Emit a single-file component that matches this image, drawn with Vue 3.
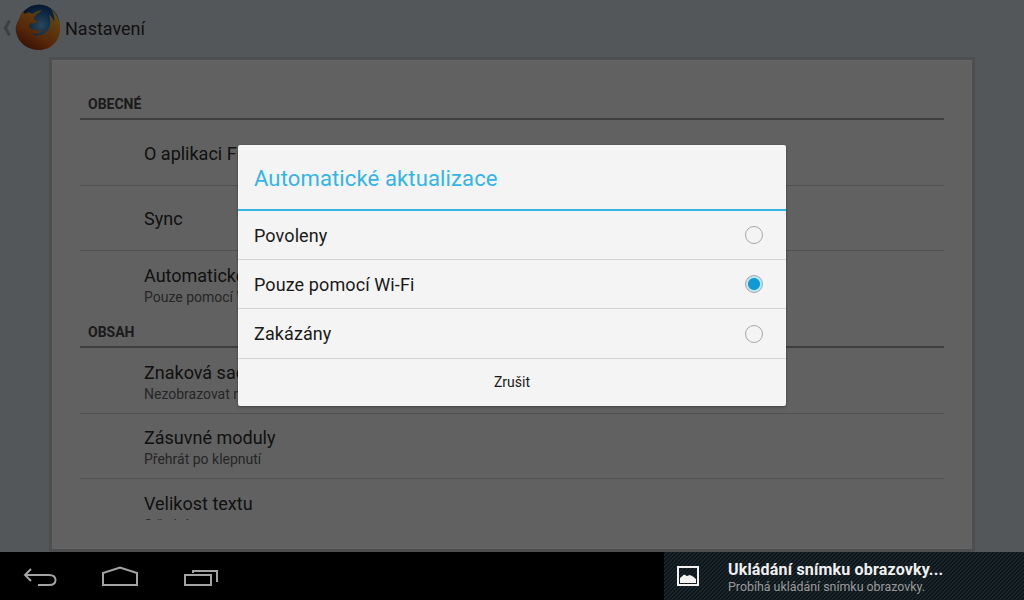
<template>
  <div class="device">
    <div class="screen">
      <header class="toolbar">
        <svg class="chevron" width="8" height="16" viewBox="0 0 8 16">
          <path d="M6.5 0.500 L2.500 8 L6.500 15.500" fill="none" stroke="#9aa0a4" stroke-width="3" />
        </svg>
        <svg class="logo" width="46" height="46" viewBox="0 0 46 46">
          <defs>
            <radialGradient id="globe" cx="0.55" cy="0.5" r="0.6">
              <stop offset="0" stop-color="#6cb2e4" />
              <stop offset="0.5" stop-color="#1f66a8" />
              <stop offset="1" stop-color="#0c2b5e" />
            </radialGradient>
            <linearGradient id="fox" x1="0.95" y1="0.05" x2="0.3" y2="1">
              <stop offset="0" stop-color="#f5d040" />
              <stop offset="0.3" stop-color="#ea9420" />
              <stop offset="0.65" stop-color="#d9651a" />
              <stop offset="1" stop-color="#8f2c0c" />
            </linearGradient>
          </defs>
          <circle cx="24" cy="21" r="20.5" fill="url(#globe)" />
          <path
            d="M8 7 C6 10 5 12 4 15 C1 20 0 24 1 28 C3 39 13 46 24 46 C36 46 45 37 45 25 C45 17 42 10 36 5 C39 10 40 14 39 18 C38 15 36 12 34 11 C36 16 36 24 31 28 C27 32 20 33 16 29 C20 31 25 29 27 27 C24 27 20 26 17 25 C14 24 13 21 16 19 C20 20 22 18 22 17 C19 16 18 15 20 12 C22 9 26 8 27 6 C22 7 19 9 17 10 C15 8 12 8 10 10 C9 9 8 8 8 7 Z"
            fill="url(#fox)"
          />
        </svg>
        <span class="toolbar-title">Nastavení</span>
      </header>

      <main class="panel">
        <div class="panel-inner">
          <div class="list">
            <section v-for="section in sections" :key="section.name">
              <h2 class="section-name">{{ section.name }}</h2>
              <div v-for="row in section.rows" :key="row.title" class="row">
                <div class="row-title">{{ row.title }}</div>
                <div v-if="row.sub" class="row-sub">{{ row.sub }}</div>
              </div>
            </section>
          </div>
        </div>
      </main>

      <div class="overlay">
        <div class="dialog">
          <div class="dialog-title">Automatické aktualizace</div>
          <div v-for="option in options" :key="option" class="option">
            <span>{{ option }}</span>
            <span class="radio" :class="{ checked: option === selected }"></span>
          </div>
          <div class="dialog-button">Zrušit</div>
        </div>
      </div>
    </div>

    <footer class="system-bar">
      <div class="nav">
        <svg width="240" height="48" viewBox="0 0 240 48" fill="none" stroke="#a3a3a3" stroke-width="2">
          <path d="M31 17 L25 23 L31 29 M25 23 H49 C53 23 55.500 25 55.500 28 C55.500 31 53 33 49 33 H38" />
          <path d="M103 33 V21 L120 15.500 L137 21 V33 Z" />
          <path d="M185 23 H211 V33 H185 Z M193 21 V19 H217 V30" />
        </svg>
      </div>
      <div class="notification">
        <svg class="notification-icon" width="22" height="20" viewBox="0 0 22 20">
          <rect x="1" y="1" width="20" height="18" fill="none" stroke="#f2f2f2" stroke-width="2" />
          <path d="M3 17 V12 L7 8.500 L10 10 L13 9 L16 10.500 L19 13 V17 Z" fill="#f2f2f2" />
        </svg>
        <div class="notification-text">
          <div class="notification-title">Ukládání snímku obrazovky...</div>
          <div class="notification-sub">Probíhá ukládání snímku obrazovky.</div>
        </div>
      </div>
    </footer>
  </div>
</template>

<script setup>
const sections = [
  {
    name: 'OBECNÉ',
    rows: [
      { title: 'O aplikaci Firefox' },
      { title: 'Sync' },
      { title: 'Automatické aktualizace', sub: 'Pouze pomocí Wi-Fi' }
    ]
  },
  {
    name: 'OBSAH',
    rows: [
      { title: 'Znaková sada', sub: 'Nezobrazovat nabídku' },
      { title: 'Zásuvné moduly', sub: 'Přehrát po klepnutí' },
      { title: 'Velikost textu', sub: 'Střední' }
    ]
  }
]

const options = ['Povoleny', 'Pouze pomocí Wi-Fi', 'Zakázány']
const selected = 'Pouze pomocí Wi-Fi'
</script>

<style>
html,
body {
  margin: 0;
  background: #000;
}
</style>

<style scoped>
.device {
  width: 1024px;
  height: 600px;
  display: flex;
  flex-direction: column;
  overflow: hidden;
  font-family: Roboto, 'Liberation Sans', sans-serif;
}

.screen {
  position: relative;
  height: 552px;
  display: flex;
  flex-direction: column;
  background: #d2d9df;
}

.toolbar {
  height: 57px;
  flex: none;
  display: flex;
  align-items: center;
  padding-left: 3px;
}

.chevron {
  margin-right: 4px;
  margin-top: -1px;
}

.logo {
  margin-right: 4px;
  margin-top: -3px;
}

.toolbar-title {
  font-size: 18px;
  color: #2c2c2c;
}

.panel {
  flex: 1;
  min-height: 0;
  margin: 0 49px;
  display: flex;
  border: 3px solid #bec4c9;
}

.panel-inner {
  flex: 1;
  min-width: 0;
  display: flex;
  flex-direction: column;
  border: 1px solid #fbfbfb;
  background: #f2f2f2;
  padding: 27px 27px 28px;
}

.list {
  flex: 1;
  min-height: 0;
  overflow: hidden;
}

.section-name {
  box-sizing: border-box;
  height: 32px;
  margin: 0;
  padding: 0 8px;
  font-size: 14px;
  font-weight: 700;
  line-height: 33px;
  color: #444;
  border-bottom: 2px solid #9b9b9b;
}

.row {
  box-sizing: border-box;
  height: 65px;
  padding-top: 2px;
  padding-left: 64px;
  display: flex;
  flex-direction: column;
  justify-content: center;
  border-bottom: 1px solid #c8c8c8;
}

.section-name + .row {
  height: 66px;
}

.row:last-child {
  border-bottom: 0;
}

.row-title {
  font-size: 18px;
  line-height: 24px;
  color: #2c2c2c;
}

.row-sub {
  font-size: 14px;
  line-height: 18px;
  color: #5f5f5f;
}

.overlay {
  position: absolute;
  inset: 0;
  display: flex;
  align-items: center;
  justify-content: center;
  padding-bottom: 1px;
  background: rgba(0, 0, 0, 0.6);
}

.dialog {
  width: 548px;
  background: #f4f4f4;
  border-radius: 2px;
  box-shadow: 0 1px 3px rgba(0, 0, 0, 0.35);
}

.dialog-title {
  box-sizing: border-box;
  height: 66px;
  padding-left: 16px;
  font-size: 22px;
  letter-spacing: 0.14px;
  line-height: 67px;
  color: #33b5e5;
  border-bottom: 2px solid #33b5e5;
}

.option {
  box-sizing: border-box;
  height: 49px;
  display: flex;
  align-items: center;
  justify-content: space-between;
  padding: 0 23px 0 16px;
  font-size: 18px;
  letter-spacing: 0.1px;
  color: #1a1a1a;
  border-bottom: 1px solid #d4d4d4;
}

.option:nth-child(4) {
  height: 50px;
}

.radio {
  box-sizing: border-box;
  width: 18px;
  height: 18px;
  border: 1.500px solid #a8a8a8;
  border-radius: 50%;
}

.radio.checked {
  background: radial-gradient(circle, #0f9bd7 0 5.500px, #bfe6f5 6.500px);
}

.dialog-button {
  box-sizing: border-box;
  height: 47px;
  padding-bottom: 2px;
  display: flex;
  align-items: center;
  justify-content: center;
  font-size: 14px;
  color: #1a1a1a;
}

.system-bar {
  flex: 1;
  display: flex;
  background: #000;
}

.nav {
  width: 664px;
  flex: none;
}

.nav svg {
  display: block;
}

.notification {
  flex: 1;
  display: flex;
  align-items: center;
  padding-left: 13px;
  background: repeating-linear-gradient(135deg, #0d1317 0 1.800px, #1a282e 1.800px 2.830px);
}

.notification-icon {
  margin-right: 29px;
}

.notification-title {
  padding-top: 1px;
  font-size: 16px;
  font-weight: 700;
  letter-spacing: 0.18px;
  line-height: 19px;
  color: #f0f0f0;
}

.notification-sub {
  font-size: 12.400px;
  line-height: 15px;
  color: #9a9a9a;
}
</style>
